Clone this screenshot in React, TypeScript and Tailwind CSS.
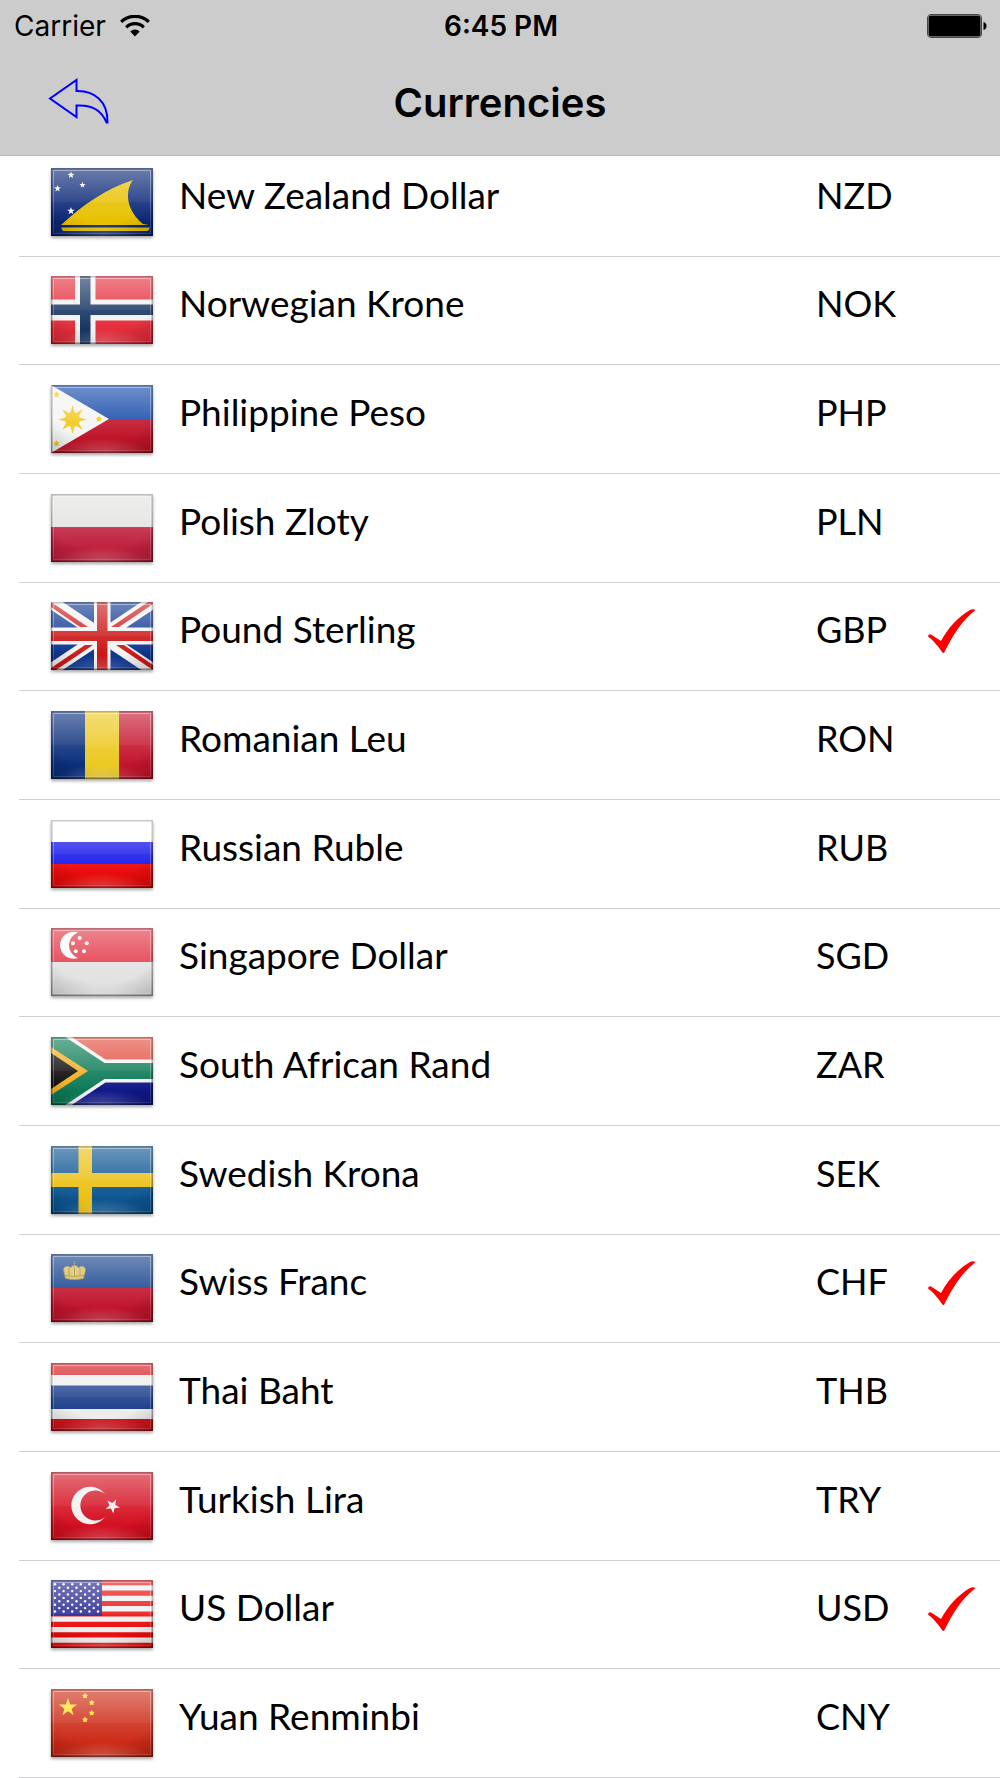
import type { ReactNode } from 'react';

interface Currency {
  code: string;
  name: string;
  selected?: boolean;
  flag: ReactNode;
}

// n-pointed star outline, rotated clockwise by `turn` degrees
function starPoints(cx: number, cy: number, r: number, turn = 0, spikes = 5, inner = 0.4) {
  const points: string[] = [];
  for (let i = 0; i < spikes * 2; i++) {
    const radius = i % 2 === 0 ? r : r * inner;
    const angle = (Math.PI * i) / spikes - Math.PI / 2 + (turn * Math.PI) / 180;
    points.push(`${cx + radius * Math.cos(angle)},${cy + radius * Math.sin(angle)}`);
  }
  return points.join(' ');
}

const US_STARS = Array.from({ length: 9 }).flatMap((_, row) =>
  Array.from({ length: row % 2 === 0 ? 6 : 5 }, (_, col) => ({
    x: (row % 2 === 0 ? 4 : 8.3) + col * 8.6,
    y: 4.3 + row * 3.4,
  })),
);

// All flags are drawn on a 102 x 68 canvas
const CURRENCIES: Currency[] = [
  {
    code: 'NZD',
    name: 'New Zealand Dollar',
    flag: (
      <>
        <rect width="102" height="68" fill="#0b2878" />
        <path d="M10 57C32 37 54 21 82 12C73 24 76 43 92 56L98 57Z" fill="#e8c000" />
        <path d="M10 59.5H99L97 63H12Z" fill="#e8c000" />
        <g fill="#fff">
          <polygon points={starPoints(20, 7, 3.6)} />
          <polygon points={starPoints(6.5, 20.5, 3.6)} />
          <polygon points={starPoints(31.5, 17, 3.2)} />
          <polygon points={starPoints(20, 43, 4)} />
        </g>
      </>
    ),
  },
  {
    code: 'NOK',
    name: 'Norwegian Krone',
    flag: (
      <>
        <rect width="102" height="68" fill="#e42c3a" />
        <path d="M24 0H44.500V23.500H102V44.500H44.500V68H24V44.500H0V23.500H24Z" fill="#f2f2f2" />
        <path d="M29 0H39.500V28.500H102V39H39.500V68H29V39H0V28.500H29Z" fill="#163462" />
      </>
    ),
  },
  {
    code: 'PHP',
    name: 'Philippine Peso',
    flag: (
      <>
        <rect width="102" height="34" fill="#1247a8" />
        <rect y="34" width="102" height="34" fill="#c01428" />
        <path d="M0 0L58 34L0 68Z" fill="#f4f4f4" />
        <g fill="#f2c91c">
          <circle cx="21.500" cy="34.500" r="7.500" />
          <polygon points={starPoints(21.5, 34.5, 14.5, 0, 8, 0.42)} />
          <polygon points={starPoints(5.5, 9.5, 3.2, 0, 5, 0.6)} />
          <polygon points={starPoints(48, 34, 3.2, 0, 5, 0.6)} />
          <polygon points={starPoints(5.5, 58.5, 3.2, 0, 5, 0.6)} />
        </g>
      </>
    ),
  },
  {
    code: 'PLN',
    name: 'Polish Zloty',
    flag: (
      <>
        <rect width="102" height="33" fill="#e2e2e0" />
        <rect y="33" width="102" height="35" fill="#c0203e" />
      </>
    ),
  },
  {
    code: 'GBP',
    name: 'Pound Sterling',
    selected: true,
    flag: (
      <>
        <rect width="102" height="68" fill="#0c3590" />
        <path d="M0 0L102 68M102 0L0 68" stroke="#f4f4f4" strokeWidth="13" />
        <g fill="#d01818">
          <path d="M0 0L37 25H29L0 5Z" />
          <path d="M60 25H68L102 2V0H97Z" />
          <path d="M102 68L65 43H73L102 63Z" />
          <path d="M42 43H34L0 66V68H5Z" />
        </g>
        <path d="M43 0H59.500V25.500H102V42.500H59.500V68H43V42.500H0V25.500H43Z" fill="#f4f4f4" />
        <path d="M46 0H56.500V29H102V39H56.500V68H46V39H0V29H46Z" fill="#cc1414" />
      </>
    ),
  },
  {
    code: 'RON',
    name: 'Romanian Leu',
    flag: (
      <>
        <rect width="34" height="68" fill="#0b2f7c" />
        <rect x="34" width="34" height="68" fill="#ecc820" />
        <rect x="68" width="34" height="68" fill="#c4142c" />
      </>
    ),
  },
  {
    code: 'RUB',
    name: 'Russian Ruble',
    flag: (
      <>
        <rect width="102" height="22" fill="#fff" />
        <rect y="22" width="102" height="22" fill="#1a1aea" />
        <rect y="44" width="102" height="24" fill="#ea0a0a" />
      </>
    ),
  },
  {
    code: 'SGD',
    name: 'Singapore Dollar',
    flag: (
      <>
        <rect width="102" height="34" fill="#e23444" />
        <rect y="34" width="102" height="34" fill="#e2e2e2" />
        <path d="M27 4.500A13.500 13.500 0 1 0 27 30A13.500 13.500 0 0 1 27 4.500Z" fill="#fff" />
        <g fill="#fff">
          <circle cx="28.700" cy="10" r="2" />
          <circle cx="22" cy="15.300" r="2" />
          <circle cx="35.700" cy="15.300" r="2" />
          <circle cx="24.700" cy="23.300" r="2" />
          <circle cx="33" cy="23.300" r="2" />
        </g>
      </>
    ),
  },
  {
    code: 'ZAR',
    name: 'South African Rand',
    flag: (
      <>
        <rect width="102" height="34" fill="#e24a3c" />
        <rect y="34" width="102" height="34" fill="#10188a" />
        <path d="M-12 -8L51 34H110M-12 76L51 34" fill="none" stroke="#f4f4f4" strokeWidth="23" />
        <path d="M-12 -8L51 34H110M-12 76L51 34" fill="none" stroke="#0c7a56" strokeWidth="16" />
        <path d="M0 0V68L51 34Z" fill="#0c7a56" />
        <path d="M0 10L37 34L0 58Z" fill="#f2ae20" />
        <path d="M0 16L27 34L0 52Z" fill="#0c0c0c" />
      </>
    ),
  },
  {
    code: 'SEK',
    name: 'Swedish Krona',
    flag: (
      <>
        <rect width="102" height="68" fill="#0c5490" />
        <path d="M27.500 0H41V27H102V41H41V68H27.500V41H0V27H27.500Z" fill="#ecc012" />
      </>
    ),
  },
  {
    code: 'CHF',
    name: 'Swiss Franc',
    selected: true,
    flag: (
      <>
        <rect width="102" height="34" fill="#12408c" />
        <rect y="34" width="102" height="34" fill="#c0142c" />
        <g fill="#d8bc50" stroke="#8a7838" strokeWidth="0.800">
          <path d="M14.500 24.500L12.500 16C13 11.500 18 11.500 19.500 14C20.500 12 22 11.500 23.500 11.500C25 11.500 26.500 12 27.500 14C29 11.500 34 11.500 34.500 16L32.500 24.500Q23.500 27 14.500 24.500Z" />
          <path d="M23.500 7V12M22 9H25M18 14V22M23.500 13V22M29 14V22M14 21.500Q23.500 23.500 33 21.500" />
        </g>
      </>
    ),
  },
  {
    code: 'THB',
    name: 'Thai Baht',
    flag: (
      <>
        <rect width="102" height="68" fill="#d0141c" />
        <rect y="12" width="102" height="44" fill="#ececec" />
        <rect y="22.500" width="102" height="23.500" fill="#163a88" />
      </>
    ),
  },
  {
    code: 'TRY',
    name: 'Turkish Lira',
    flag: (
      <>
        <rect width="102" height="68" fill="#d40f20" />
        <path d="M54 22A18.800 18.800 0 1 0 54 45A15 15 0 1 1 54 22Z" fill="#f0f0f0" />
        <polygon points={starPoints(61.5, 34, 7.5, 30)} fill="#f0f0f0" />
      </>
    ),
  },
  {
    code: 'USD',
    name: 'US Dollar',
    selected: true,
    flag: (
      <>
        <rect width="102" height="68" fill="#f0f0f0" />
        <path
          d="M0 2.600H102M0 13.100H102M0 23.500H102M0 34H102M0 44.400H102M0 54.900H102M0 65.400H102"
          stroke="#ea0a0a"
          strokeWidth="5.200"
        />
        <rect width="51" height="36" fill="#20208e" />
        {US_STARS.map((s) => (
          <circle key={`${s.x}-${s.y}`} cx={s.x} cy={s.y} r="1.200" fill="#fff" />
        ))}
      </>
    ),
  },
  {
    code: 'CNY',
    name: 'Yuan Renminbi',
    flag: (
      <>
        <rect width="102" height="68" fill="#cc2a16" />
        <g fill="#ffe21f">
          <polygon points={starPoints(17, 18.5, 9.5)} />
          <polygon points={starPoints(34, 7, 3, 0, 5, 0.6)} />
          <polygon points={starPoints(40.7, 13.7, 3, 0, 5, 0.6)} />
          <polygon points={starPoints(40.7, 24, 3, 0, 5, 0.6)} />
          <polygon points={starPoints(34, 30.7, 3, 0, 5, 0.6)} />
        </g>
      </>
    ),
  },
];

export default function App() {
  return (
    <div className="min-h-screen flex flex-col bg-white text-black">
      <FlagDefs />
      <header className="sticky top-0 z-10 bg-[#cccccc] border-b border-[#b8b8b8] font-['Inter',sans-serif]">
        <StatusBar />
        <div className="grid grid-cols-[1fr_auto_1fr] items-center h-[104px] px-12">
          <button type="button" aria-label="Back" className="justify-self-start pb-1">
            <BackIcon />
          </button>
          <h1 className="text-[40px] leading-[48px] font-semibold">Currencies</h1>
        </div>
      </header>

      {/* the list is scrolled slightly under the bar */}
      <ul className="flex-1 grid auto-rows-fr -mt-2">
        {CURRENCIES.map((c) => (
          <CurrencyRow key={c.code} currency={c} />
        ))}
      </ul>
    </div>
  );
}

function StatusBar() {
  return (
    <div className="grid grid-cols-[1fr_auto_1fr] items-center h-[51px] pl-[14px] pr-3 text-[28px] leading-8">
      <div className="flex items-center gap-[14px]">
        <span>Carrier</span>
        <WifiIcon />
      </div>
      <span className="font-semibold">6:45 PM</span>
      <BatteryIcon />
    </div>
  );
}

function CurrencyRow({ currency }: { currency: Currency }) {
  return (
    <li className="ml-[19px] border-b border-[#d0d0d2]">
      <button
        type="button"
        aria-pressed={Boolean(currency.selected)}
        className="flex items-center w-full h-full min-h-[100px] pl-8 pr-6 text-left font-['Lato',sans-serif] text-[36px] leading-[44px]"
      >
        <Flag>{currency.flag}</Flag>
        <span className="flex-1 pl-[26px] pb-[14px] text-[37px]">{currency.name}</span>
        <span className="w-28 pb-[14px]">{currency.code}</span>
        <span className="w-12 pb-[10px]">{currency.selected && <CheckIcon />}</span>
      </button>
    </li>
  );
}

function Flag({ children }: { children: ReactNode }) {
  return (
    <svg
      className="w-[102px] h-[68px] shrink-0 shadow-[0_2px_3px_rgba(0,0,0,0.35)]"
      viewBox="0 0 102 68"
      aria-hidden="true"
    >
      {children}
      <rect width="102" height="68" fill="url(#flag-gloss)" />
      <rect width="102" height="68" fill="url(#flag-vignette)" />
      <rect y="34" width="102" height="34" fill="url(#flag-glow)" />
      <rect x="2.500" y="2.500" width="97" height="63" fill="none" stroke="url(#flag-rim)" />
      <rect x="0.750" y="0.750" width="100.500" height="66.500" fill="none" stroke="url(#flag-edge)" strokeWidth="1.500" />
    </svg>
  );
}

// Gradients shared by every flag
function FlagDefs() {
  return (
    <svg className="absolute w-0 h-0" aria-hidden="true">
      <defs>
        <linearGradient id="flag-gloss" x1="0" y1="0" x2="0" y2="1">
          <stop offset="0" stopColor="#fff" stopOpacity="0.400" />
          <stop offset="0.490" stopColor="#fff" stopOpacity="0.160" />
          <stop offset="0.510" stopColor="#fff" stopOpacity="0.110" />
          <stop offset="0.800" stopColor="#fff" stopOpacity="0" />
        </linearGradient>
        <radialGradient id="flag-vignette" cx="0.500" cy="0.300" r="0.850">
          <stop offset="0.600" stopColor="#000" stopOpacity="0" />
          <stop offset="1" stopColor="#000" stopOpacity="0.200" />
        </radialGradient>
        <radialGradient id="flag-glow" cx="0.500" cy="1" r="0.450">
          <stop offset="0" stopColor="#fff" stopOpacity="0.220" />
          <stop offset="1" stopColor="#fff" stopOpacity="0" />
        </radialGradient>
        <linearGradient id="flag-rim" x1="0" y1="0" x2="0" y2="1">
          <stop offset="0" stopColor="#fff" stopOpacity="0.400" />
          <stop offset="1" stopColor="#fff" stopOpacity="0.120" />
        </linearGradient>
        <linearGradient id="flag-edge" x1="0" y1="0" x2="0" y2="1">
          <stop offset="0" stopColor="#000" stopOpacity="0.200" />
          <stop offset="1" stopColor="#000" stopOpacity="0.400" />
        </linearGradient>
      </defs>
    </svg>
  );
}

function BackIcon() {
  return (
    <svg className="w-[61px] h-[46px]" viewBox="0 0 61 46" fill="none" stroke="#0000ff" strokeWidth="2">
      <path d="M2 20.500L28.500 2V13C46 12.500 60 23 59.500 44.500H58.500C54 33 45 26.500 28.500 27.500V39Z" />
    </svg>
  );
}

function WifiIcon() {
  return (
    <svg className="w-[30px] h-[22px]" viewBox="0 0 30 22" aria-hidden="true">
      <path d="M1.200 6.800A20 20 0 0 1 28.800 6.800M6.200 12.300A12.600 12.600 0 0 1 23.800 12.300" fill="none" stroke="#000" strokeWidth="3.200" />
      <path d="M15 21.500L10.300 16.500A6.700 6.700 0 0 1 19.700 16.500Z" />
    </svg>
  );
}

function BatteryIcon() {
  return (
    <svg className="justify-self-end w-[61px] h-6" viewBox="0 0 61 24" aria-hidden="true">
      <rect x="0.500" y="0.500" width="54" height="23" rx="3.500" fill="none" stroke="#444" />
      <rect x="1.500" y="1.500" width="52" height="21" rx="2.500" />
      <path d="M56.500 8C60.500 8.500 60.500 15.500 56.500 16Z" />
    </svg>
  );
}

function CheckIcon() {
  return (
    <svg className="w-12 h-[45px]" viewBox="0 0 48 45" role="img" aria-label="Selected">
      <path d="M0 27Q1 24.500 3 25.500L13 32C20 19 30 8 42 1Q45 -0.500 47.500 1C34 12 26 24 16.500 43Q15.500 45 14 43C10 37 5 31 0.500 28Z" fill="#ff0000" />
    </svg>
  );
}
